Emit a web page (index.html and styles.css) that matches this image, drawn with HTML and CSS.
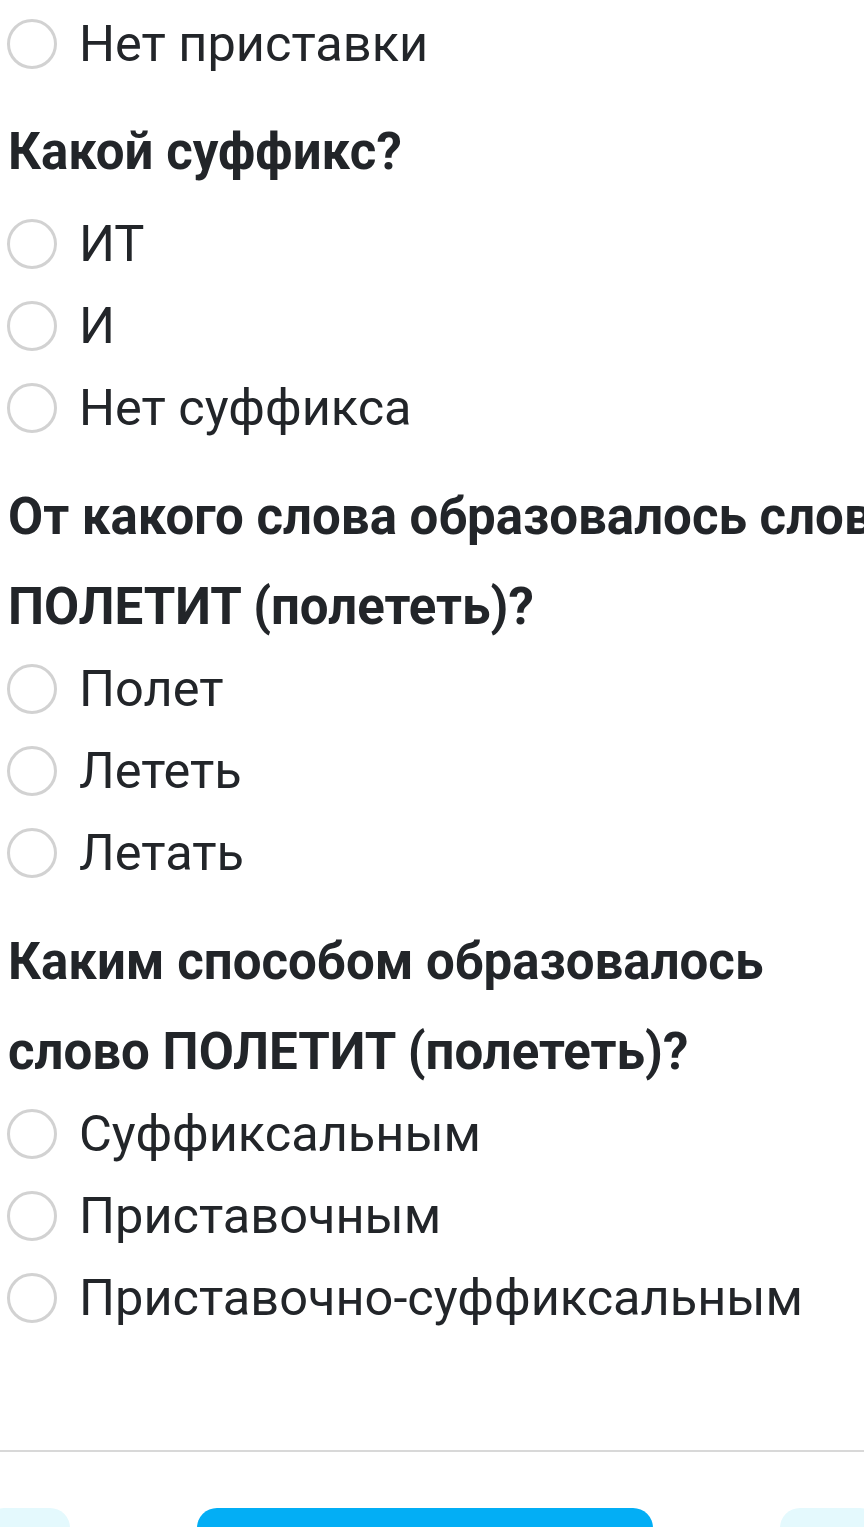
FILE: index.html
```html
<!DOCTYPE html>
<html lang="ru">
<head>
<meta charset="utf-8">
<link rel="stylesheet" href="styles.css">
</head>
<body>
<main class="quiz">
  <ul class="options">
    <li class="option"><span class="radio"></span><span class="label">Нет приставки</span></li>
  </ul>

  <section class="question">
    <h2 class="title title-single">Какой суффикс?</h2>
    <ul class="options">
      <li class="option"><span class="radio"></span><span class="label">ИТ</span></li>
      <li class="option"><span class="radio"></span><span class="label">И</span></li>
      <li class="option"><span class="radio"></span><span class="label">Нет суффикса</span></li>
    </ul>
  </section>

  <section class="question">
    <h2 class="title"><span class="line">От какого слова образовалось слово</span><span class="line">ПОЛЕТИТ (полететь)?</span></h2>
    <ul class="options">
      <li class="option"><span class="radio"></span><span class="label">Полет</span></li>
      <li class="option"><span class="radio"></span><span class="label">Лететь</span></li>
      <li class="option"><span class="radio"></span><span class="label">Летать</span></li>
    </ul>
  </section>

  <section class="question">
    <h2 class="title"><span class="line">Каким способом образовалось</span><span class="line">слово ПОЛЕТИТ (полететь)?</span></h2>
    <ul class="options">
      <li class="option"><span class="radio"></span><span class="label">Суффиксальным</span></li>
      <li class="option"><span class="radio"></span><span class="label">Приставочным</span></li>
      <li class="option"><span class="radio"></span><span class="label">Приставочно-суффиксальным</span></li>
    </ul>
  </section>
</main>

<footer class="footer">
  <div class="divider"></div>
  <nav class="buttons">
    <button class="btn btn-side btn-left" aria-label="Назад"></button>
    <button class="btn btn-main" aria-label="Далее"></button>
    <button class="btn btn-side btn-right" aria-label="Вперёд"></button>
  </nav>
</footer>
</body>
</html>
```

FILE: styles.css
```css
html, body {
  margin: 0;
  padding: 0;
  background: #ffffff;
}

body {
  width: 864px;
  height: 1527px;
  overflow: hidden;
  font-family: Roboto, "Noto Sans", "Liberation Sans", sans-serif;
  color: #222529;
}

.quiz {
  padding-top: 3px;
}

.options {
  list-style: none;
  margin: 0;
  padding: 0;
}

.option {
  display: flex;
  align-items: center;
  height: 82px;
  padding-left: 7px;
}

.radio {
  box-sizing: border-box;
  width: 50px;
  height: 50px;
  border: 3px solid #d2d2d2;
  border-radius: 50%;
  flex: none;
}

.label {
  margin-left: 22px;
  font-size: 50.5px;
  line-height: 1;
  white-space: nowrap;
}

.title {
  margin: 23px 0 -4px;
  padding-left: 8px;
  font-size: 51px;
  font-weight: 700;
  line-height: 90px;
  white-space: nowrap;
}

.title-single {
  margin-top: 22px;
  margin-bottom: 6px;
}

.line {
  display: block;
}

.footer {
  margin-top: 111px;
}

.divider {
  height: 2px;
  background: #d8d8d8;
}

.buttons {
  display: flex;
  justify-content: space-between;
  margin-top: 56px;
  height: 60px;
}

.btn {
  border: none;
  padding: 0;
  height: 60px;
  border-radius: 20px;
}

.btn-side {
  background: #e4f9fd;
}

.btn-left {
  margin-left: -16px;
  width: 86px;
}

.btn-right {
  margin-right: -16px;
  width: 100px;
}

.btn-main {
  width: 456px;
  background: #03aef5;
}
```
